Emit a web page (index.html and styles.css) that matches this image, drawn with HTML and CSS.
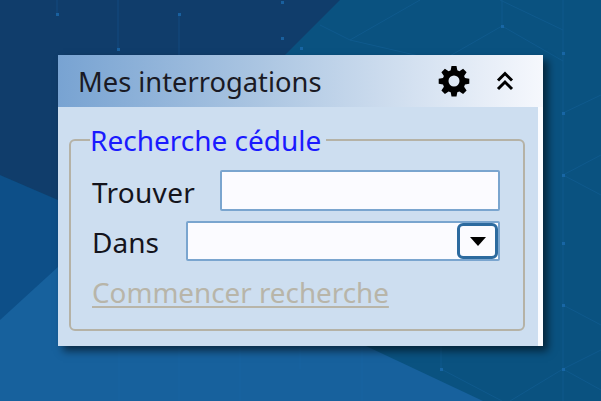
FILE: index.html
```html
<!DOCTYPE html>
<html lang="fr">

<head>
    <meta charset="UTF-8">
    <meta name="viewport" content="width=device-width, initial-scale=1.0">
    <title>Mes interrogations</title>

    <link rel="stylesheet" href="styles.css">
</head>

<body>
    <svg class="backdrop" width="601" height="401" viewBox="0 0 601 401">
        <rect width="601" height="401" fill="#0a5280"/>
        <polygon points="0,175 58,200 300,300 200,400 0,320" fill="#0d4f88"/>
        <polygon points="0,320 58,267 366,346 483,401 0,401" fill="#17619d"/>
        <polygon points="0,0 340,0 285,55 100,218 58,200 0,175" fill="#103d6b"/>
        <g stroke="#1c6cab" stroke-width="1" fill="none" opacity="0.3">
            <path d="M57 0V14M118 0V49M179 14V55M502 0V26M563 0V401"/>
            <path d="M119 346V401M179 346V401M240 346V401M362 346V401M441 346V369M300 346V369"/>
            <path d="M320 25 350 40 420 0M350 40 441 61 502 26 563 61M500 0 563 30"/>
            <path d="M441 369 502 401M563 369 510 401M563 369 601 350M563 369 601 390M563 113 601 95M563 175 601 155M563 175 601 195M563 305 601 325"/>
        </g>
        <g fill="#1c6cb0" opacity="0.75">
            <rect x="56" y="13" width="3" height="3"/>
            <rect x="178" y="13" width="3" height="3"/>
            <rect x="117" y="48" width="3" height="3"/>
            <rect x="281" y="1" width="3" height="3"/>
            <rect x="281" y="37" width="3" height="3"/>
            <rect x="300" y="47" width="3" height="3"/>
            <rect x="501" y="25" width="3" height="3"/>
            <rect x="562" y="52" width="3" height="3"/>
            <rect x="562" y="112" width="3" height="3"/>
            <rect x="562" y="174" width="3" height="3"/>
            <rect x="562" y="242" width="3" height="3"/>
            <rect x="562" y="304" width="3" height="3"/>
            <rect x="562" y="368" width="3" height="3"/>
            <rect x="440" y="368" width="3" height="3"/>
        </g>
    </svg>

    <div class="panel">
        <div class="panel-header">
            <span class="panel-title">Mes interrogations</span>
            <svg class="gear-icon" width="32" height="32" viewBox="0 0 32 32">
                <path fill="#000" fill-rule="evenodd" d="M13.500 1h5l.8 4.300 2.100.9 3.700-2.500 3.500 3.500-2.500 3.700.9 2.100 4.300.8v5l-4.300.8-.9 2.100 2.500 3.700-3.500 3.500-3.700-2.500-2.100.9-.8 4.300h-5l-.8-4.300-2.100-.9-3.700 2.500-3.500-3.500 2.500-3.700-.9-2.100-4.300-.8v-5l4.300-.8.9-2.100-2.500-3.700 3.500-3.500 3.700 2.500 2.100-.9zM16 10.500a5.500 5.500 0 1 0 0 11 5.500 5.500 0 0 0 0-11z"/>
            </svg>
            <svg class="collapse-icon" width="18" height="20" viewBox="0 0 18 20">
                <path fill="none" stroke="#000" stroke-width="3" d="M2 9.500 9 2.500l7 7M2 18l7-7 7 7"/>
            </svg>
        </div>
        <div class="panel-body">
            <fieldset class="search-box">
                <legend>Recherche cédule</legend>
                <div class="field-row">
                    <label class="label-find">Trouver</label>
                    <div class="text-input"></div>
                </div>
                <div class="field-row">
                    <label class="label-in">Dans</label>
                    <div class="select-input">
                        <span class="select-button"><span class="select-arrow"></span></span>
                    </div>
                </div>
                <a class="start-link">Commencer recherche</a>
            </fieldset>
        </div>
    </div>
</body>

</html>
```

FILE: styles.css
```css
body {
    margin: 0;
    width: 601px;
    height: 401px;
    overflow: hidden;
    position: relative;
    font-family: "Noto Sans", "DejaVu Sans", sans-serif;
    padding: 55px 0 0 58px;
    box-sizing: border-box;
}

.backdrop {
    position: absolute;
    left: 0;
    top: 0;
}

.panel {
    position: relative;
    width: 485px;
    height: 291px;
    background-color: #fbfcff;
    box-shadow: 5px 5px 8px rgba(0, 0, 0, 0.55);
    display: flex;
    flex-direction: column;
}

.panel-header {
    height: 52px;
    flex-shrink: 0;
    background: linear-gradient(to right, #78a3d2, #a9c4e1 40%, #f6f8fd);
    display: flex;
    align-items: center;
    padding-left: 20px;
}

.panel-title {
    font-size: 27.300px;
    color: #1a1a24;
    flex-grow: 1;
}

.gear-icon {
    margin-right: 26px;
}

.collapse-icon {
    margin-right: 29px;
}

.panel-body {
    flex-grow: 1;
    background-color: #cddef0;
    margin-right: 5px;
    padding: 18px 13px 0 11px;
}

.search-box {
    margin: 0;
    padding: 15px 0 0 21px;
    height: 206px;
    box-sizing: border-box;
    border: 2px solid #b5b2a6;
    border-radius: 6px;
}

.search-box legend {
    font-size: 28px;
    line-height: 30px;
    color: #1a1aff;
    padding: 0 5px 0 0;
    margin-left: -2px;
}

.field-row {
    display: flex;
    align-items: center;
    margin-bottom: 10px;
    color: #14141c;
    font-size: 28px;
}

.label-find {
    width: 128px;
    padding-top: 2px;
    letter-spacing: 0.300px;
}

.label-in {
    width: 94px;
    padding-top: 2px;
}

.text-input {
    width: 280px;
    height: 41px;
    box-sizing: border-box;
    background-color: #fbfbff;
    border: 2px solid #7aa5cf;
    border-radius: 2px;
}

.select-input {
    width: 314px;
    height: 40px;
    box-sizing: border-box;
    background-color: #fbfbff;
    border: 2px solid #7aa5cf;
    border-radius: 2px;
    display: flex;
    justify-content: flex-end;
}

.select-button {
    width: 41px;
    height: 100%;
    box-sizing: border-box;
    background-color: #fbfbff;
    border: 3px solid #2c6a9f;
    border-radius: 6px;
    display: flex;
    align-items: center;
    justify-content: center;
}

.select-arrow {
    width: 0;
    height: 0;
    border-left: 8px solid transparent;
    border-right: 8px solid transparent;
    border-top: 9px solid #000;
}

.start-link {
    display: block;
    margin-top: 16px;
    font-size: 27.800px;
    line-height: 30px;
    color: #b8b5a9;
    text-decoration: underline;
    text-decoration-thickness: 2px;
    text-underline-offset: 3px;
}
```
